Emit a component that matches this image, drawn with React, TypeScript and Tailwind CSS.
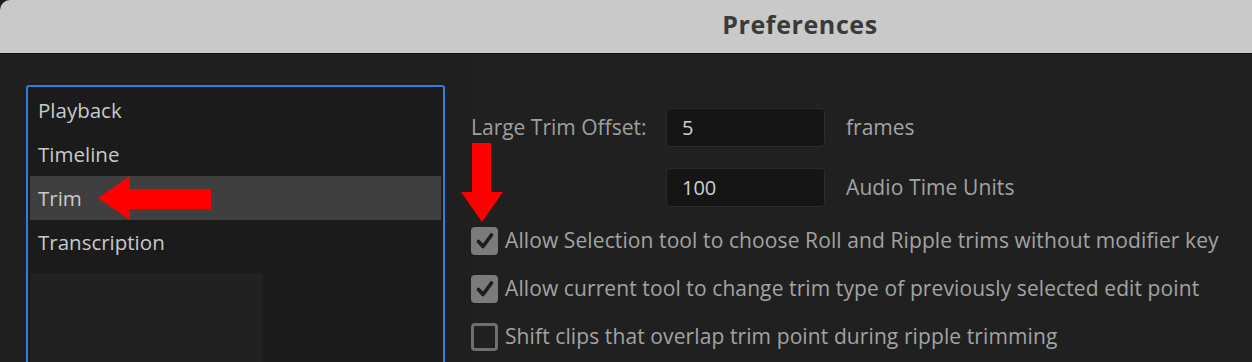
import React from "react";

const font = { fontFamily: '"Open Sans", "Noto Sans", Arial, sans-serif' };

function Check({ checked }: { checked: boolean }) {
  if (checked) {
    return (
      <div className="w-[27px] h-[28px] rounded-[4px] bg-[#7b7b7b] flex items-center justify-center shrink-0">
        <svg width="22" height="22" viewBox="0 0 22 22">
          <path d="M4.5 11.5 L9 16.5 L17.5 5" fill="none" stroke="#1c1c1c" strokeWidth="3.6" strokeLinecap="round" strokeLinejoin="round" />
        </svg>
      </div>
    );
  }
  return <div className="w-[27px] h-[28px] rounded-[4px] border-[3px] border-[#6f6f6f] shrink-0" />;
}

export default function App() {
  const items = ["Playback", "Timeline", "Trim", "Transcription"];
  const checks: [boolean, string][] = [
    [true, "Allow Selection tool to choose Roll and Ripple trims without modifier key"],
    [true, "Allow current tool to change trim type of previously selected edit point"],
    [false, "Shift clips that overlap trim point during ripple trimming"],
  ];
  return (
    <div className="relative w-[1252px] h-[362px] overflow-hidden bg-[#1f1f1f]" style={font}>
      <div className="h-[54px] bg-[#c9c9c9] rounded-tl-[10px] border-b border-[#0f0f0f] flex items-center justify-center pl-[348px] pb-[4px]">
        <span className="text-[25px] font-bold text-[#3a3a3a] tracking-[0.6px]">Preferences</span>
      </div>
      <div className="flex">
        <div className="ml-[26px] mt-[31px] w-[419px] h-[300px] border-2 border-[#2f7fe2] rounded-[3px] bg-[#1b1b1b] px-[2px] pt-[1px] shrink-0">
          {items.map((t) => (
            <div
              key={t}
              className={`h-[44px] flex items-center pl-[8px] text-[20.5px] text-[#c9c9c9] ${t === "Trim" ? "bg-[#3f3f3f]" : ""}`}
            >
              {t}
            </div>
          ))}
          <div className="ml-[1px] mt-[9px] w-[232px] h-[120px] bg-[#212121]" />
        </div>
        <div className="ml-[26px] pt-[54px] flex flex-col bg-[#202020] flex-1">
          <div className="flex items-center h-[39px]">
            <div className="w-[195px] text-[21px] text-[#9f9f9f] whitespace-nowrap">Large Trim Offset:</div>
            <div className="w-[159px] h-[39px] bg-[#151515] border border-[#2b2b2b] rounded-[4px] flex items-center pl-[15px] text-[20px] text-[#d0d0d0]">5</div>
            <div className="ml-[21px] text-[21px] text-[#a3a3a3]">frames</div>
          </div>
          <div className="flex items-center h-[39px] mt-[21px] pl-[195px]">
            <div className="w-[159px] h-[39px] bg-[#151515] border border-[#2b2b2b] rounded-[4px] flex items-center pl-[15px] text-[20px] text-[#d0d0d0]">100</div>
            <div className="ml-[21px] text-[21px] text-[#a3a3a3] tracking-[0.1px]">Audio Time Units</div>
          </div>
          <div className="mt-[10px] flex flex-col">
            {checks.map(([c, t]) => (
              <div key={t} className="h-[48px] flex items-center gap-[7px]">
                <Check checked={c} />
                <span className="text-[21px] text-[#a3a3a3] whitespace-nowrap tracking-[0.1px]">{t}</span>
              </div>
            ))}
          </div>
        </div>
      </div>
      <svg className="absolute left-0 top-0 pointer-events-none" width="1252" height="362">
        <polygon points="98,198 130,176 130,189 211,189 211,209 130,209 130,220" fill="#ff0000" />
        <polygon points="472,143 491,143 491,192 503,192 482,222 461,192 472,192" fill="#ff0000" />
      </svg>
    </div>
  );
}
